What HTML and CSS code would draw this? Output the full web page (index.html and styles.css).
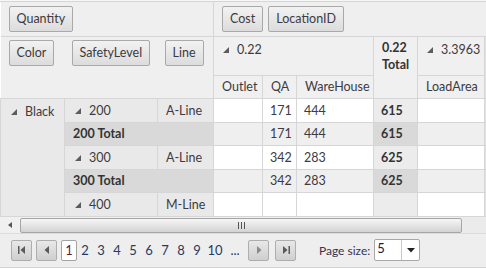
FILE: index.html
```html
<!DOCTYPE html>
<html lang="en">

<head>
    <meta charset="UTF-8">
    <title>Pivot Grid</title>
    <link rel="stylesheet" href="styles.css">
</head>

<body>

    <div class="pivot">
        <table class="grid">
            <colgroup>
                <col style="width: 64px">
                <col style="width: 93px">
                <col style="width: 56px">
                <col style="width: 49px">
                <col style="width: 34px">
                <col style="width: 77px">
                <col style="width: 44px">
                <col style="width: 67px">
                <col style="width: 2px">
            </colgroup>
            <tr class="zone-row">
                <td colspan="3" class="zone zone-data"><span class="field">Quantity</span></td>
                <td colspan="6" class="zone zone-cols"><span class="field">Cost</span><span class="field">LocationID</span></td>
            </tr>
            <tr class="head-row">
                <td rowspan="2" class="rowfield first"><span class="field">Color</span></td>
                <td rowspan="2" class="rowfield"><span class="field">SafetyLevel</span></td>
                <td rowspan="2" class="rowfield last"><span class="field">Line</span></td>
                <td colspan="3" class="colhead"><i class="tri"></i>0.22</td>
                <td rowspan="2" class="colhead total">0.22 Total</td>
                <td class="colhead"><i class="tri"></i>3.3963</td>
                <td rowspan="2" class="edge"></td>
            </tr>
            <tr class="sub-row">
                <td class="colhead sub">Outlet</td>
                <td class="colhead sub">QA</td>
                <td class="colhead sub">WareHouse</td>
                <td class="colhead sub">LoadArea</td>
            </tr>
            <tr class="row tall">
                <td rowspan="5" class="rh top"><i class="tri"></i>Black</td>
                <td class="rh"><i class="tri"></i>200</td>
                <td class="rh">A-Line</td>
                <td class="cell"></td>
                <td class="cell">171</td>
                <td class="cell">444</td>
                <td class="cell tot">615</td>
                <td class="cell"></td>
                <td class="edge"></td>
            </tr>
            <tr class="row total-row">
                <td colspan="2" class="rh rtot">200 Total</td>
                <td class="cell"></td>
                <td class="cell">171</td>
                <td class="cell">444</td>
                <td class="cell tot">615</td>
                <td class="cell"></td>
                <td class="edge"></td>
            </tr>
            <tr class="row tall">
                <td class="rh"><i class="tri"></i>300</td>
                <td class="rh">A-Line</td>
                <td class="cell"></td>
                <td class="cell">342</td>
                <td class="cell">283</td>
                <td class="cell tot">625</td>
                <td class="cell"></td>
                <td class="edge"></td>
            </tr>
            <tr class="row total-row">
                <td colspan="2" class="rh rtot">300 Total</td>
                <td class="cell"></td>
                <td class="cell">342</td>
                <td class="cell">283</td>
                <td class="cell tot">625</td>
                <td class="cell"></td>
                <td class="edge"></td>
            </tr>
            <tr class="row tall">
                <td class="rh"><i class="tri"></i>400</td>
                <td class="rh">M-Line</td>
                <td class="cell"></td>
                <td class="cell"></td>
                <td class="cell"></td>
                <td class="cell tot"></td>
                <td class="cell"></td>
                <td class="edge"></td>
            </tr>
        </table>

        <div class="hscroll">
            <div class="scroll-arrow"><i class="arrow-left"></i></div>
            <div class="thumb"><span class="grip"></span></div>
            <div class="track-end"></div>
        </div>

        <div class="pager">
            <button class="nav">
                <svg width="10" height="10" viewBox="0 0 10 10"><rect x="1" y="1" width="1.5" height="8" fill="#5a5a5a"/><polygon points="8,1 3.5,5 8,9" fill="#5a5a5a"/></svg>
            </button>
            <button class="nav">
                <svg width="10" height="10" viewBox="0 0 10 10"><polygon points="7,1 2.5,5 7,9" fill="#5a5a5a"/></svg>
            </button>
            <div class="pages">
                <span class="page current">1</span>
                <span class="page">2</span>
                <span class="page">3</span>
                <span class="page">4</span>
                <span class="page">5</span>
                <span class="page">6</span>
                <span class="page">7</span>
                <span class="page">8</span>
                <span class="page">9</span>
                <span class="page wide">10</span>
                <span class="page wide">...</span>
            </div>
            <button class="nav next">
                <svg width="10" height="10" viewBox="0 0 10 10"><polygon points="3,1 7.5,5 3,9" fill="#8a8a8a"/></svg>
            </button>
            <button class="nav">
                <svg width="10" height="10" viewBox="0 0 10 10"><polygon points="2,1 6.5,5 2,9" fill="#5a5a5a"/><rect x="7.5" y="1" width="1.5" height="8" fill="#5a5a5a"/></svg>
            </button>
            <span class="size-label">Page size:</span>
            <div class="select">
                <span class="value">5</span>
                <span class="drop"><svg width="8" height="5" viewBox="0 0 8 5"><polygon points="0,0 8,0 4,4.5" fill="#222"/></svg></span>
            </div>
        </div>
    </div>

</body>

</html>
```

FILE: styles.css
```css
/* Basic Reset */
* {
    margin: 0;
    padding: 0;
    box-sizing: border-box;
}

body {
    font-family: 'Lato', 'Liberation Sans', sans-serif;
    font-size: 12.5px;
    color: #3d3a42;
    background-color: #f7f7f7;
    width: 486px;
    height: 268px;
    overflow: hidden;
}

/* Pivot container */
.pivot {
    margin-top: 1px;
    border-top: 1px solid #d6d6d6;
    background-color: #fff;
}

.grid {
    width: 486px;
    table-layout: fixed;
    border-collapse: collapse;
}

.grid td {
    padding: 0;
    white-space: nowrap;
    overflow: hidden;
}

/* Drop zones */
.zone-row {
    height: 34px;
}

.zone {
    background-color: #efefef;
    border-bottom: 1px solid #d6d6d6;
    vertical-align: middle;
}

.zone-data {
    padding-left: 8px !important;
}

.zone-cols {
    border-left: 1px solid #d6d6d6;
    padding-left: 8px !important;
}

.field {
    display: inline-flex;
    align-items: center;
    height: 26px;
    padding: 0 7px;
    margin-right: 5px;
    border: 1px solid #a9a9a9;
    border-radius: 2px;
    background: linear-gradient(#f2f2f2, #dcdcdc);
    color: #3d3a42;
    vertical-align: middle;
}

.rowfield {
    background-color: #efefef;
    vertical-align: top;
    padding-top: 3px !important;
    padding-left: 7px !important;
    border-bottom: 1px solid #d6d6d6;
}

.rowfield.first {
    padding-left: 8px !important;
}

.rowfield.last {
    border-right: 1px solid #d6d6d6;
}

/* Column headers */
.head-row {
    height: 39px;
}

.sub-row {
    height: 23px;
}

.colhead {
    background-color: #f0f0f0;
    border: 1px solid #d6d6d6;
    vertical-align: top;
    padding: 5px 0 0 9px !important;
}

.colhead.sub {
    vertical-align: middle;
    padding: 0 0 0 8px !important;
}

.colhead.total {
    white-space: normal !important;
    font-weight: bold;
    line-height: 17px;
    padding: 2px 4px 0 8px !important;
    color: #333;
}

.edge {
    background-color: #e2e2e2;
    border: 1px solid #d6d6d6;
}

.tri {
    display: inline-block;
    width: 0;
    height: 0;
    border-style: solid;
    border-width: 0 0 6px 6px;
    border-color: transparent transparent #5c5c5c transparent;
    margin-right: 8px;
    vertical-align: 1px;
}

/* Data rows */
.row {
    height: 23px;
}

.row.tall {
    height: 24px;
}

.rh {
    background-color: #e9e9e9;
    border: 1px solid #d6d6d6;
    padding-left: 8px !important;
    vertical-align: middle;
}

.rh .tri {
    margin-left: 2px;
}

.rh.top {
    vertical-align: top;
    padding-top: 5px !important;
}

.rh.rtot {
    background-color: #d9d9d9;
    font-weight: bold;
    color: #333;
}

.cell {
    border: 1px solid #d6d6d6;
    padding-left: 7px !important;
    vertical-align: middle;
}

.total-row .cell {
    background-color: #efefef;
}

.cell.tot {
    background-color: #ececec;
    font-weight: bold;
    color: #333;
}

.total-row .cell.tot {
    background-color: #d9d9d9;
}

/* Horizontal scrollbar */
.hscroll {
    display: flex;
    height: 17px;
    background-color: #f0f0f0;
    border-bottom: 1px solid #dcdcdc;
}

.scroll-arrow {
    width: 20px;
    display: flex;
    align-items: center;
    justify-content: center;
}

.arrow-left {
    width: 0;
    height: 0;
    border-style: solid;
    border-width: 3px 4px 3px 0;
    border-color: transparent #555 transparent transparent;
}

.thumb {
    width: 442px;
    margin-top: 1px;
    height: 15px;
    border: 1px solid #a6a6a6;
    border-radius: 2px;
    background: linear-gradient(#f6f6f6, #d3d3d3);
    display: flex;
    align-items: center;
    justify-content: center;
}

.grip {
    width: 7px;
    height: 7px;
    background: repeating-linear-gradient(90deg, #555 0 1px, transparent 1px 3px);
}

.track-end {
    flex: 1;
    background-color: #ebebeb;
}

/* Pager */
.pager {
    display: flex;
    align-items: center;
    height: 34px;
    padding-left: 11px;
    background-color: #eeeeee;
    border-bottom: 1px solid #d2d2d2;
    font-size: 13px;
}

.nav {
    flex: none;
    width: 21px;
    height: 21px;
    margin-right: 4px;
    border: 1px solid #aeaeae;
    border-radius: 2px;
    background: linear-gradient(#e8e8e8, #cfcfcf);
    display: flex;
    align-items: center;
    justify-content: center;
}

.nav.next {
    margin-right: 6px;
}

.pages {
    flex: none;
    display: flex;
    align-items: center;
    margin-right: 3px;
}

.page {
    flex: none;
    width: 16px;
    text-align: center;
    color: #263a5e;
}

.page.wide {
    width: 20px;
}

.page.current {
    height: 21px;
    border: 1px solid #a3a3a3;
    border-radius: 2px;
    background-color: #fff;
    display: flex;
    align-items: center;
    justify-content: center;
    color: #5a2440;
}

.size-label {
    flex: none;
    margin-left: 19px;
    margin-right: 4px;
    color: #3a3050;
    font-size: 12px;
}

.select {
    flex: none;
    display: flex;
    width: 46px;
    height: 22px;
    border: 1px solid #a8a8a8;
    border-radius: 2px;
    background-color: #fff;
}

.select .value {
    width: 27px;
    padding-left: 2px;
    border-right: 1px solid #c8c8c8;
    color: #1a1a3a;
    line-height: 17px;
}

.select .drop {
    flex: 1;
    display: flex;
    align-items: center;
    justify-content: center;
}
```
